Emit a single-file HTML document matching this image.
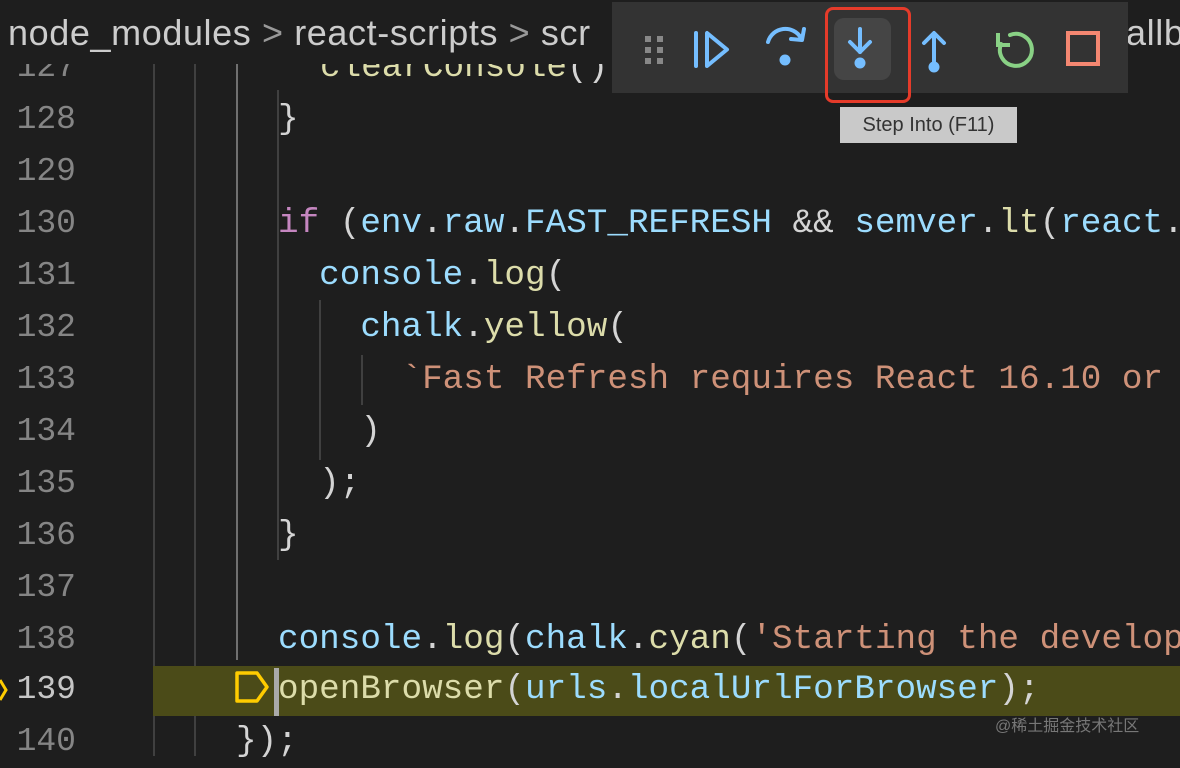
<!DOCTYPE html><html><head><style>
body{margin:0;width:1180px;height:756px;background:#1e1e1e;overflow:hidden;position:relative;font-family:"Liberation Mono",monospace}
.ln{position:absolute;left:0;width:76px;text-align:right;color:#858585;font-size:33px;line-height:52px;height:52px}
.code{position:absolute;left:278px;font-size:34.3px;line-height:52px;height:52px;white-space:pre;color:#d4d4d4}
.g{position:absolute;width:2px;background:#404040;top:60px;height:696px}
.k{color:#c586c0}.v{color:#9cdcfe}.f{color:#dcdcaa}.s{color:#ce9178}.c{color:#4fc1ff}
</style></head><body>
<div class="g" style="left:153px"></div><div class="g" style="left:194px"></div><div class="g" style="left:236px;background:#707070;height:600px"></div>
<div style="position:absolute;left:153px;top:666px;width:1027px;height:50px;background:#4b4b18"></div>
<div class="g" style="left:277px;top:90px;height:470px;background:#404040"></div>
<div class="g" style="left:319px;top:300px;height:160px"></div>
<div class="g" style="left:361px;top:355px;height:50px"></div>

<div class="ln" style="top:42px">127</div>
<div class="code" style="top:42px;left:320px"><span class="f">clearConsole</span>();</div>
<div class="ln" style="top:94px">128</div><div class="code" style="top:94px">}</div>
<div class="ln" style="top:146px">129</div>
<div class="ln" style="top:198px">130</div><div class="code" style="top:198px"><span class="k">if</span> (<span class="v">env</span>.<span class="v">raw</span>.<span class="v">FAST_REFRESH</span> &amp;&amp; <span class="v">semver</span>.<span class="f">lt</span>(<span class="v">react</span>.</div>
<div class="ln" style="top:250px">131</div><div class="code" style="top:250px">  <span class="v">console</span>.<span class="f">log</span>(</div>
<div class="ln" style="top:302px">132</div><div class="code" style="top:302px">    <span class="v">chalk</span>.<span class="f">yellow</span>(</div>
<div class="ln" style="top:354px">133</div><div class="code" style="top:354px">      <span class="s">`Fast Refresh requires React 16.10 or</span></div>
<div class="ln" style="top:406px">134</div><div class="code" style="top:406px">    )</div>
<div class="ln" style="top:458px">135</div><div class="code" style="top:458px">  );</div>
<div class="ln" style="top:510px">136</div><div class="code" style="top:510px">}</div>
<div class="ln" style="top:562px">137</div>
<div class="ln" style="top:614px">138</div><div class="code" style="top:614px"><span class="v">console</span>.<span class="f">log</span>(<span class="v">chalk</span>.<span class="f">cyan</span>(<span class="s">'Starting the develop</span></div>
<div class="ln" style="top:664px;color:#c6c6c6">139</div><div class="code" style="top:664px"><span class="f">openBrowser</span>(<span class="v">urls</span>.<span class="v">localUrlForBrowser</span>);</div>
<div style="position:absolute;left:274px;top:668px;width:5px;height:48px;background:#aaa"></div>
<svg style="position:absolute;left:0;top:676px" width="12" height="28"><path d="M0 4 L6 14 L0 24" stroke="#ffcc00" stroke-width="3" fill="none"/></svg>
<svg style="position:absolute;left:234px;top:670px" width="40" height="40"><path d="M3 3 H23 L33 17 L23 31 H3 Z" stroke="#ffcc00" stroke-width="3.5" fill="none" stroke-linejoin="round"/></svg>
<div class="ln" style="top:716px">140</div><div class="code" style="top:716px;left:236px">});</div>

<div style="position:absolute;left:0;top:0;width:1180px;height:64px;background:#1e1e1e;font-family:'Liberation Sans',sans-serif;font-size:36px;letter-spacing:0.6px;color:#cccccc;line-height:66px;white-space:nowrap;padding-left:8px">node_modules <span style="color:#999">&gt;</span> react-scripts <span style="color:#999">&gt;</span> scr<span style="position:absolute;left:1126px">allb</span></div>

<div style="position:absolute;left:612px;top:2px;width:516px;height:91px;background:#333333"></div>
<div style="position:absolute;left:645px;top:36px;width:22px;height:28px;display:grid;grid-template-columns:6px 6px;gap:5px 6px">
<i style="background:#888;height:6px"></i><i style="background:#888;height:6px"></i><i style="background:#888;height:6px"></i><i style="background:#888;height:6px"></i><i style="background:#888;height:6px"></i><i style="background:#888;height:6px"></i></div>
<div style="position:absolute;left:834px;top:18px;width:57px;height:62px;background:#454545;border-radius:10px"></div>
<svg style="position:absolute;left:612px;top:2px" width="516" height="91">
<g stroke="#75beff" stroke-width="4" fill="none" stroke-linecap="round" stroke-linejoin="round">
<path d="M84 31 V64"/><path d="M95 31 V64 L115 47.5 Z"/>
<path d="M156 40 A18 18 0 0 1 189 36"/><path d="M179 37 L190 38 L192 27"/>
<path d="M248 27 V50"/><path d="M238 40 L248 50 L258 40"/>
<path d="M322 62 V32"/><path d="M312 41 L322 31 L332 41"/>
</g>
<g fill="#75beff"><circle cx="173" cy="58" r="5.5"/><circle cx="248" cy="61" r="5.5"/><circle cx="322" cy="65" r="5.5"/></g>
<path d="M389 42 A16 16 0 1 0 398 33" stroke="#89d185" stroke-width="4" fill="none" stroke-linecap="round"/>
<path d="M386 31 V43 H398" stroke="#89d185" stroke-width="4" fill="none"/>
<rect x="456" y="31" width="30" height="31" stroke="#f48771" stroke-width="4" fill="none"/>
</svg>
<div style="position:absolute;left:825px;top:7px;width:80px;height:90px;border:3px solid #e53b2a;border-radius:8px"></div>
<div style="position:absolute;left:840px;top:107px;width:177px;height:36px;background:#c9c9c9;color:#333;font-family:'Liberation Sans',sans-serif;font-size:20px;line-height:36px;text-align:center">Step Into (F11)</div>
<div style="position:absolute;left:995px;top:712px;color:#777;font-family:'Liberation Sans','Noto Sans CJK SC',sans-serif;font-size:16px">@稀土掘金技术社区</div>
</body></html>
